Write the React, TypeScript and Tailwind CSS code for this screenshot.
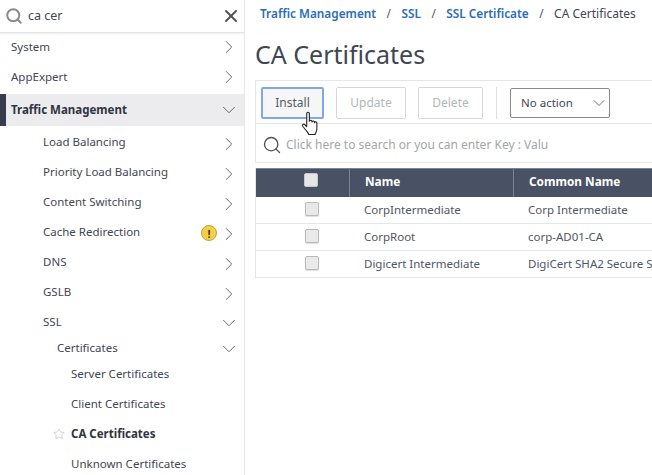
import React from "react"
import { ChevronDown, ChevronRight, Search, Star, X } from "lucide-react"

function Row({ label, indent, open, bold, warn, star, sub, h = "h-[30px]" }: {
  label: string
  indent: string
  open?: boolean
  bold?: boolean
  warn?: boolean
  star?: boolean
  sub?: boolean
  h?: string
}) {
  return (
    <div className={`${h} flex items-center pt-[2px] pr-[4px] ${indent} text-[11.5px] text-[#3f4654]`}>
      {star && <Star className="w-[12px] h-[12px] -ml-[18px] mr-[6px] text-[#b5b5b5]" strokeWidth={1.2} />}
      <span className={bold ? "font-bold text-[#2f3541]" : ""}>{label}</span>
      <span className="flex-1" />
      {warn && (
        <span className="w-[16px] h-[16px] mt-[2px] mr-[1px] rounded-full bg-[#f4cf4e] border border-[#c9a227] flex items-center justify-center text-[11px] font-bold leading-none text-[#4a3b00]">!</span>
      )}
      {open === true && <ChevronDown className={`w-[22px] h-[22px] text-[#555c68] ${sub ? "mt-[2px]" : ""}`} strokeWidth={1} />}
      {open === false && <ChevronRight className={`w-[22px] h-[22px] text-[#555c68] ${sub ? "mt-[4px]" : ""}`} strokeWidth={1} />}
    </div>
  )
}

function Btn({ label, active }: { label: string; active?: boolean }) {
  return (
    <div className={`h-[32px] flex items-center justify-center rounded-[2px] text-[12px] ${active ? "w-[63px] border-2 border-[#7fa8e8] bg-[#f6f6f6] text-[#555c68]" : "border border-[#d6d6d6] text-[#b4b7bc]"} ${label === "Update" ? "w-[70px]" : ""} ${label === "Delete" ? "w-[65px]" : ""}`}>
      {label}
    </div>
  )
}

function Check({ head }: { head?: boolean }) {
  return <div className={`w-[14px] h-[14px] rounded-[2px] border ${head ? "bg-[#e6e6e6] border-[#c8c8c8]" : "bg-[#e9e9e9] border-[#b9b9b9] shadow-[0_1px_1px_#ddd]"}`} />
}

function TableRow({ name, common }: { name: string; common: string }) {
  return (
    <div className="h-[27px] flex items-center border-b border-[#e3e6ea] text-[11.5px] text-[#4f5662]">
      <div className="w-[94px] pl-[49px] shrink-0 -mt-[2px]"><Check /></div>
      <div className="w-[164px] pl-[14px] shrink-0">{name}</div>
      <div className="pl-[14px] whitespace-nowrap">{common}</div>
    </div>
  )
}

export default function App() {
  return (
    <div className="w-[652px] h-[475px] overflow-hidden flex bg-white font-['Noto_Sans',sans-serif]">
      {/* left nav */}
      <div className="w-[245px] h-[475px] shrink-0 overflow-hidden border-r border-[#e8e8e8]">
        <div className="h-[33px] -mb-[2px] flex items-center pl-[5px] pr-[3px] border-b border-[#e4e4e4] shadow-[0_1px_2px_#eee]">
          <Search className="w-[18px] h-[18px] text-[#8a8a8a]" strokeWidth={2.6} />
          <span className="ml-[5px] text-[12.5px] text-[#3f4654]">ca cer</span>
          <span className="flex-1" />
          <X className="w-[20px] h-[20px] text-[#555]" strokeWidth={2.4} />
        </div>
        <Row label="System" indent="pl-[11px]" open={false} />
        <Row label="AppExpert" indent="pl-[11px]" open={false} />
        <div className="mt-[3px] h-[32px] flex items-center pr-[4px] bg-[#ecebee] border-l-[6px] border-[#363d4c] pl-[5px] text-[11.5px] font-bold text-[#2f3541]">
          <span>Traffic Management</span>
          <span className="flex-1" />
          <ChevronDown className="w-[22px] h-[22px] text-[#555c68]" strokeWidth={1} />
        </div>
        <Row label="Load Balancing" indent="pl-[43px]" open={false} sub />
        <Row label="Priority Load Balancing" indent="pl-[43px]" open={false} sub />
        <Row label="Content Switching" indent="pl-[43px]" open={false} sub />
        <Row label="Cache Redirection" indent="pl-[43px]" open={false} warn sub />
        <Row label="DNS" indent="pl-[43px]" open={false} sub />
        <Row label="GSLB" indent="pl-[43px]" open={false} sub />
        <Row label="SSL" indent="pl-[43px]" open sub />
        <Row label="Certificates" indent="pl-[57px]" open sub h="h-[22px]" />
        <Row label="Server Certificates" indent="pl-[71px]" />
        <Row label="Client Certificates" indent="pl-[71px]" />
        <Row label="CA Certificates" indent="pl-[71px]" bold star />
        <Row label="Unknown Certificates" indent="pl-[71px]" />
      </div>

      {/* main */}
      <div className="flex-1 min-w-0 pl-[10px] overflow-hidden">
        <div className="h-[27px] flex items-center pl-[5px] gap-[10.5px] text-[11.8px] whitespace-nowrap">
          <span className="font-semibold text-[#2a6db5]">Traffic Management</span>
          <span className="text-[#4f5662]">/</span>
          <span className="font-semibold text-[#2a6db5]">SSL</span>
          <span className="text-[#4f5662]">/</span>
          <span className="font-semibold text-[#2a6db5]">SSL Certificate</span>
          <span className="text-[#4f5662]">/</span>
          <span className="text-[12px] text-[#3f4654]">CA Certificates</span>
        </div>
        <div className="h-[53px] pt-[3px] flex items-center text-[25px] text-[#3f4654] whitespace-nowrap">CA Certificates</div>
        <div className="border border-r-0 border-[#e6e6e6] h-[83px]">
          <div className="h-[43px] pt-[2px] flex items-center pl-[5px] border-b border-[#e6e6e6]">
            <div className="relative">
              <Btn label="Install" active />
              <svg className="absolute left-[40px] top-[24px]" width="18" height="24" viewBox="0 0 16 22">
                <path d="M5 2.2c0-1.5 2.4-1.5 2.4 0v7.2c0-1.3 2.4-1.3 2.4 0v.6c0-1.2 2.3-1.2 2.3 0v.8c0-1.1 2.2-1.1 2.2.2v5.6c0 2.2-1.2 3.3-1.7 5H6.9c-.6-1.6-1.6-2.6-3-4.4L1.3 14c-.9-1.4.9-2.6 2-1.4L5 14.3z" fill="#fff" stroke="#222" strokeWidth="1" strokeLinejoin="round" />
              </svg>
            </div>
            <div className="ml-[12px]"><Btn label="Update" /></div>
            <div className="ml-[12px]"><Btn label="Delete" /></div>
            <div className="ml-[13px] w-px h-[32px] bg-[#dedede]" />
            <div className="ml-[13px] w-[100px] h-[30px] flex items-center pl-[10px] border border-[#8a8a8a] rounded-[2px] text-[11.5px] text-[#3f4654]">
              <span>No action</span>
              <span className="flex-1" />
              <ChevronDown className="w-[20px] h-[20px] text-[#555c68]" strokeWidth={1} />
            </div>
          </div>
          <div className="h-[38px] pt-[3px] flex items-center pl-[6px] text-[12px] text-[#a2a6ac] whitespace-nowrap">
            <Search className="w-[20px] h-[20px] text-[#4a5160] mr-[4px]" strokeWidth={1.6} />
            Click here to search or you can enter Key : Valu
          </div>
        </div>
        <div className="mt-[5px] border-l border-[#e3e6ea]">
          <div className="h-[29px] flex items-center bg-[#495165] border-t border-[#7a8295] text-[11.8px] font-bold text-white whitespace-nowrap">
            <div className="w-[94px] pl-[48px] h-full flex items-start pt-[4px] border-r border-[#7a8295] shrink-0"><Check head /></div>
            <div className="w-[164px] pl-[15px] pb-[2px] h-full flex items-center border-r border-[#7a8295] shrink-0">Name</div>
            <div className="pl-[15px] pb-[2px]">Common Name</div>
          </div>
          <TableRow name="CorpIntermediate" common="Corp Intermediate" />
          <TableRow name="CorpRoot" common="corp-AD01-CA" />
          <TableRow name="Digicert Intermediate" common="DigiCert SHA2 Secure Server CA" />
        </div>
      </div>
    </div>
  )
}
